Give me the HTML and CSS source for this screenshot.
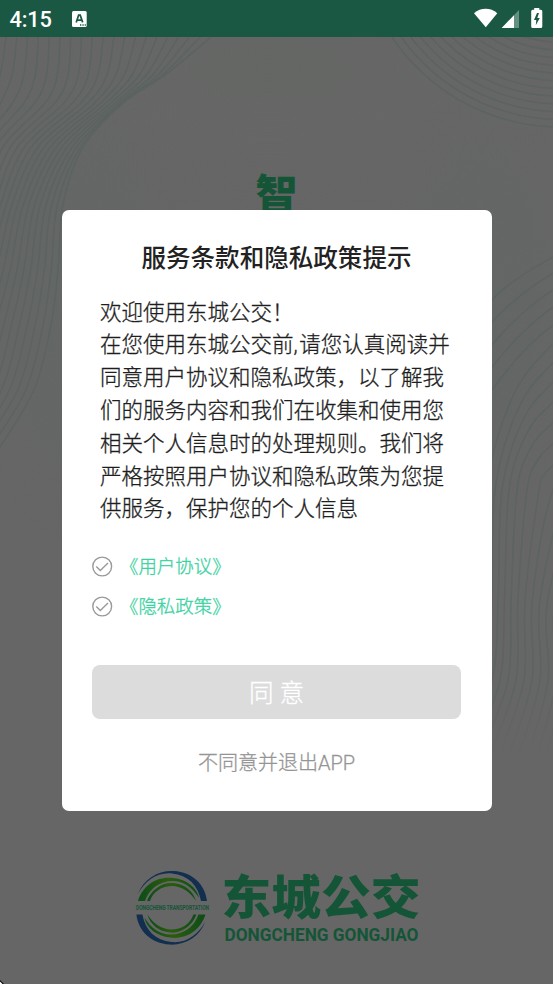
FILE: index.html
```html
<!DOCTYPE html>
<html lang="zh-CN">
<head>
<meta charset="utf-8">
<title>东城公交</title>
<link rel="stylesheet" href="styles.css">
</head>
<body>
<svg class="waves" viewBox="0 0 553 984" aria-hidden="true"><g id="waves"></g></svg>
<div class="app">
  <header class="status">
    <span class="clock">4:15</span>
    <svg class="badge" width="15" height="16" viewBox="0 0 15 16"><rect width="14.7" height="16" rx="1.5" fill="#fff"/><path d="M4.2 11.4 6.6 4.2h1.6l2.5 7.2M5.2 9.2h4.4" fill="none" stroke="#1b5843" stroke-width="1.7"/><path d="M8 14h1.3M10.4 14h1.3M12.7 14h1.2" stroke="#1b5843" stroke-width="1.3"/></svg>
    <svg class="signals" width="72" height="22" viewBox="0 0 72 22"><path d="M1 6.2C7.8.3 17.5.3 24.3 6.2L12.8 20.2z" fill="#fff"/><path d="M28.7 21 46 3v18z" fill="#64907f"/><path d="M28.7 21 41 8.2V21z" fill="#fff"/><path d="M58.2 4.3q0-1.500 1.500-1.500h1.500V1h5.100v1.800h1.500q1.500 0 1.500 1.500v15.200q0 1.500-1.500 1.500h-8.100q-1.500 0-1.500-1.500z" fill="#fff"/><path d="m64 6-3 7h2.300l-.5 5.200L66.800 11h-2.500L66 6z" fill="#1b5843"/></svg>
  </header>
  <div class="slogan">智</div>
  <main class="dialog">
    <h1>服务条款和隐私政策提示</h1>
    <p class="copy">欢迎使用东城公交！<br>在您使用东城公交前<span class="comma">,</span>请您认真阅读并<br>同意用户协议和隐私政策，以了解我<br>们的服务内容和我们在收集和使用您<br>相关个人信息时的处理规则。我们将<br>严格按照用户协议和隐私政策为您提<br>供服务，保护您的个人信息</p>
    <div class="checks">
      <label class="check"><svg width="21" height="21" viewBox="0 0 21 21"><circle cx="10.2" cy="10.5" r="9.4"/><path d="m4.300 10.500 4 4 7.700-7.400"/></svg><a>《用户协议》</a></label>
      <label class="check"><svg width="21" height="21" viewBox="0 0 21 21"><circle cx="10.2" cy="10.5" r="9.4"/><path d="m4.300 10.500 4 4 7.700-7.400"/></svg><a>《隐私政策》</a></label>
    </div>
    <button class="agree">同 意</button>
    <div class="exit">不同意并退出APP</div>
  </main>
  <footer class="brand">
    <svg class="emblem" width="76" height="76" viewBox="0 0 76 76">
      <defs>
        <linearGradient id="g"><stop offset="0" stop-color="#0d4c18"/><stop offset=".5" stop-color="#2a5c0d"/><stop offset="1" stop-color="#0d4c18"/></linearGradient>
        <g id="half">
          <path d="M3 24C9 8 24 0 39 1c18 1 31 13 33 30h-6C63 15 53 5 37 3.500 22 2 10 11 3 24z" fill="#132f50"/>
          <path d="M3 31C8 15 22 6 38 8c14 1 24 10 26 20C58 18 49 11 38 11 24 11 14 19 10 31z" fill="url(#g)"/>
          <path d="M12 31C16 20 27 12 38 13c12 1 20 8 23 18-6-9-13-14-23-15-12 0-20 6-23 15z" fill="url(#g)"/>
        </g>
      </defs>
      <use href="#half"/><use href="#half" transform="rotate(180 36.700 37.800)"/>
      <text x="1" y="40.300" textLength="73" lengthAdjust="spacingAndGlyphs" class="ring">DONGCHENG TRANSPORTATION</text>
    </svg>
    <svg class="names" width="200" height="76" viewBox="0 0 200 76">
      <text x="-1.500" y="44" textLength="199" lengthAdjust="spacingAndGlyphs" class="cn">东城公交</text>
      <text x="1.500" y="70.500" textLength="194" lengthAdjust="spacingAndGlyphs" class="en">DONGCHENG GONGJIAO</text>
    </svg>
  </footer>
</div>
<svg class="corner" width="5" height="5" viewBox="0 0 5 5"><path d="M0 1 4 5H0z" fill="#000"/><path d="M0 2.500 2.500 5H0z" fill="#fff"/></svg>
<script src="waves.js"></script>
</body>
</html>
```

FILE: styles.css
```css
* { box-sizing: border-box; }
body { margin: 0; background: #666; font-family: Roboto, "Noto Sans CJK SC", sans-serif; overflow: hidden; }
.waves { position: absolute; left: 0; top: 0; width: 553px; height: 984px;
  -webkit-mask-image: linear-gradient(#000 680px, transparent 755px);
  mask-image: linear-gradient(#000 680px, transparent 755px);
  background: radial-gradient(ellipse 320px 140px at 270px 70px, #656765, #65676500),
    radial-gradient(ellipse 110px 260px at 70px 280px, #636765, #63676500),
    radial-gradient(ellipse 100px 220px at 480px 300px, #636765, #63676500); }
.waves path, .waves circle { fill: none; stroke: #5b6462; stroke-width: 1.5; }
.app { position: relative; height: 984px; display: flex; flex-direction: column; align-items: center; }
.status { width: 100%; height: 37px; flex: none; background: #1b5843; display: flex; align-items: center; padding: 0 8px 0 9.500px; }
.clock { color: #fff; font-size: 21.800px; font-weight: 500; letter-spacing: -.2px; line-height: 35px; width: 62.500px; padding-top: 2px; }
.signals { margin-left: auto; margin-top: -2px; }
.slogan { height: 172.700px; padding-top: 133px; flex: none; font: 900 42px/44px "Noto Sans CJK SC", sans-serif; color: #145537; overflow: hidden; }
.dialog { width: 430px; height: 601.300px; flex: none; background: #fff; border-radius: 7px; padding: 31px 30.500px 0; display: flex; flex-direction: column; }
h1 { margin: 0; text-align: center; font-size: 24.550px; line-height: 36px; font-weight: 500; color: #222; }
.copy, .check a, .agree, .exit { -webkit-text-stroke-width: .3px; }
.copy { margin: 20px 0 0 8px; font-size: 21.500px; font-weight: 300; line-height: 32.800px; color: #1e1e1e; white-space: nowrap; }
.comma { letter-spacing: 1.500px; }
.checks { margin-top: 19.500px; }
.check { display: flex; align-items: center; height: 40.700px; }
.check svg { fill: none; stroke: #999; stroke-width: 1.400; }
.check a { margin-left: 7px; padding-top: 1px; font-size: 18.450px; font-weight: 300; line-height: 28px; color: #3ad29f; }
.agree { margin-top: 37.500px; height: 54px; flex: none; border: 0; border-radius: 8px; background: #dcdcdc; color: #fff; font: 300 24.550px/54px Roboto, "Noto Sans CJK SC", sans-serif; padding: 2px 0 0; }
.exit { margin-top: 29px; text-align: center; font-size: 20px; font-weight: 300; line-height: 30px; color: #959595; }
.brand { margin-top: 59px; width: 284px; display: flex; }
.emblem { flex: none; }
.ring { font: 700 6.800px Roboto, sans-serif; fill: #145537; }
.names { flex: none; margin-left: 12px; overflow: visible; }
.cn { font: 900 47px "Noto Sans CJK SC", sans-serif; fill: #145537; }
.en { font: 700 18px Roboto, sans-serif; fill: #145537; }
.corner { position: absolute; left: 0; top: 979px; }
```

FILE: waves.js
```javascript
const group = document.getElementById('waves');
const ns = 'http://www.w3.org/2000/svg';

function add(tag, attrs) {
  const el = document.createElementNS(ns, tag);
  for (const key in attrs) el.setAttribute(key, attrs[key]);
  group.appendChild(el);
}

// Smooth curve through a list of points
function curve(p) {
  let d = `M${p[0]}`;
  for (let i = 0; i < p.length - 1; i++) {
    const a = p[i - 1] || p[i], b = p[i], c = p[i + 1], e = p[i + 2] || c;
    d += `C${b[0] + (c[0] - a[0]) / 6},${b[1] + (c[1] - a[1]) / 6} ${c[0] - (e[0] - b[0]) / 6},${c[1] - (e[1] - b[1]) / 6} ${c}`;
  }
  return d;
}

// Upper left bundle
for (let i = 0; i < 20; i++) {
  const t = i / 19, s = 1 - t;
  add('path', { d: curve([
    [6 + 205 * t, 37],
    [0 + 165 * (1 - Math.pow(s, 1.4)), 75],
    [-12 + 135 * (1 - Math.pow(s, 1.8)), 103],
    [-36 + 119 * (1 - Math.pow(s, 1.3)), 147],
    [63 - 108 * s, 205],
    [58 - 130 * s, 270],
    [51 - 150 * s, 325],
    [34 - 155 * s, 390],
    [-2 - 170 * s, 450]
  ]) });
}

// Upper right rings
for (let r = 202; r > 100; r -= 7.7) add('circle', { cx: 560, cy: -75, r });

// Right bundle
const at490 = [0, 0, 0, 0, 0, 486, 495, 502, 509, 517, 527, 539, 553];
for (let i = 0; i < 24; i++) {
  const y = 257 + 16 * i + 0.27 * i * i;
  if (i < 5) {
    const end = 300 + 22.5 * i;
    add('path', { d: curve([[600, y - 24], [553, y], [522, y + (end - y) * .43], [492, end], [465, end + 42]]) });
    continue;
  }
  const x = i < 13 ? at490[i] : 553 + 14 * (i - 12);
  const points = i < 12
    ? [[600, y - 38], [553, y], [x + .4 * (553 - x), y + .36 * (490 - y)], [x, 490]]
    : [[x + 45, 420], [x, 490]];
  points.push([492 + 6 * (i - 6) + .12 * (i - 6) ** 2, 600], [484 + 8 * (i - 6), 680], [452 + 9.5 * (i - 6), 755]);
  add('path', { d: curve(points) });
}
```
